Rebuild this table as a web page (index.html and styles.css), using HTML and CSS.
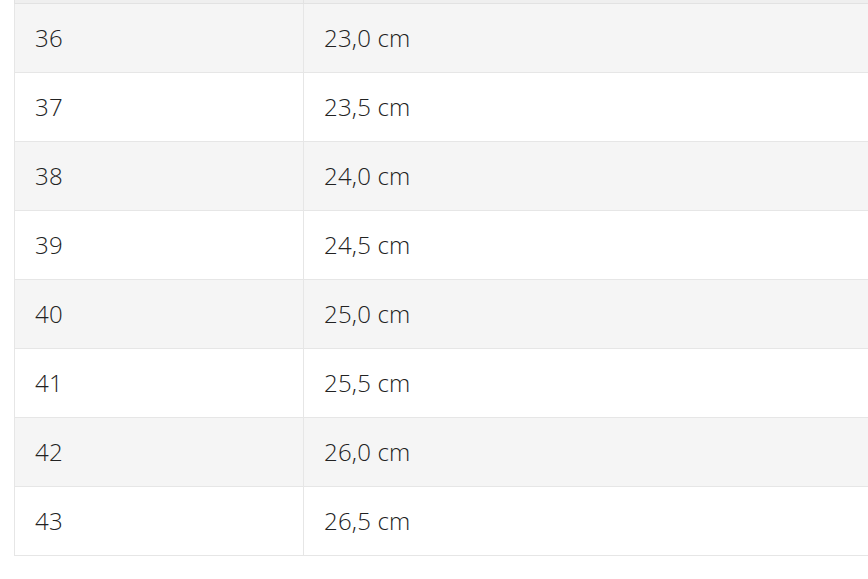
FILE: index.html
```html
<!DOCTYPE html>
<html>
<head>
<meta charset="utf-8">
<link rel="stylesheet" href="styles.css">
</head>
<body>
<div class="wrap">
<table class="sizes">
<thead><tr class="head"><th></th><th></th></tr></thead>
<tbody>
<tr class="odd"><td class="c1">36</td><td class="c2">23,0 cm</td></tr>
<tr><td class="c1">37</td><td class="c2">23,5 cm</td></tr>
<tr class="odd"><td class="c1">38</td><td class="c2">24,0 cm</td></tr>
<tr><td class="c1">39</td><td class="c2">24,5 cm</td></tr>
<tr class="odd"><td class="c1">40</td><td class="c2">25,0 cm</td></tr>
<tr><td class="c1">41</td><td class="c2">25,5 cm</td></tr>
<tr class="odd"><td class="c1">42</td><td class="c2">26,0 cm</td></tr>
<tr><td class="c1">43</td><td class="c2">26,5 cm</td></tr>
</tbody>
</table>
</div>
</body>
</html>
```
FILE: styles.css
```css
html, body {
  margin: 0;
  padding: 0;
  background: #ffffff;
  overflow: hidden;
  width: 868px;
  height: 579px;
}
.wrap {
  padding-left: 14px;
  width: 868px;
  box-sizing: border-box;
  overflow: hidden;
}
.sizes {
  border-collapse: collapse;
  width: 856px;
  font-family: "Open Sans", sans-serif;
  font-weight: 300;
  font-size: 24px;
  letter-spacing: 0.2px;
  color: #222;
}
.sizes th {
  height: 3px;
  padding: 0;
  background: #efefef;
  border: 1px solid #e2e2e2;
  border-top: none;
}
.sizes td {
  height: 69px;
  padding: 0 0 0 20px;
  border: 1px solid #e6e6e6;
  box-sizing: border-box;
  line-height: 1;
  vertical-align: middle;
}
.sizes tr.odd td {
  background: #f5f5f5;
}
.sizes .c1 {
  width: 289px;
}
```
